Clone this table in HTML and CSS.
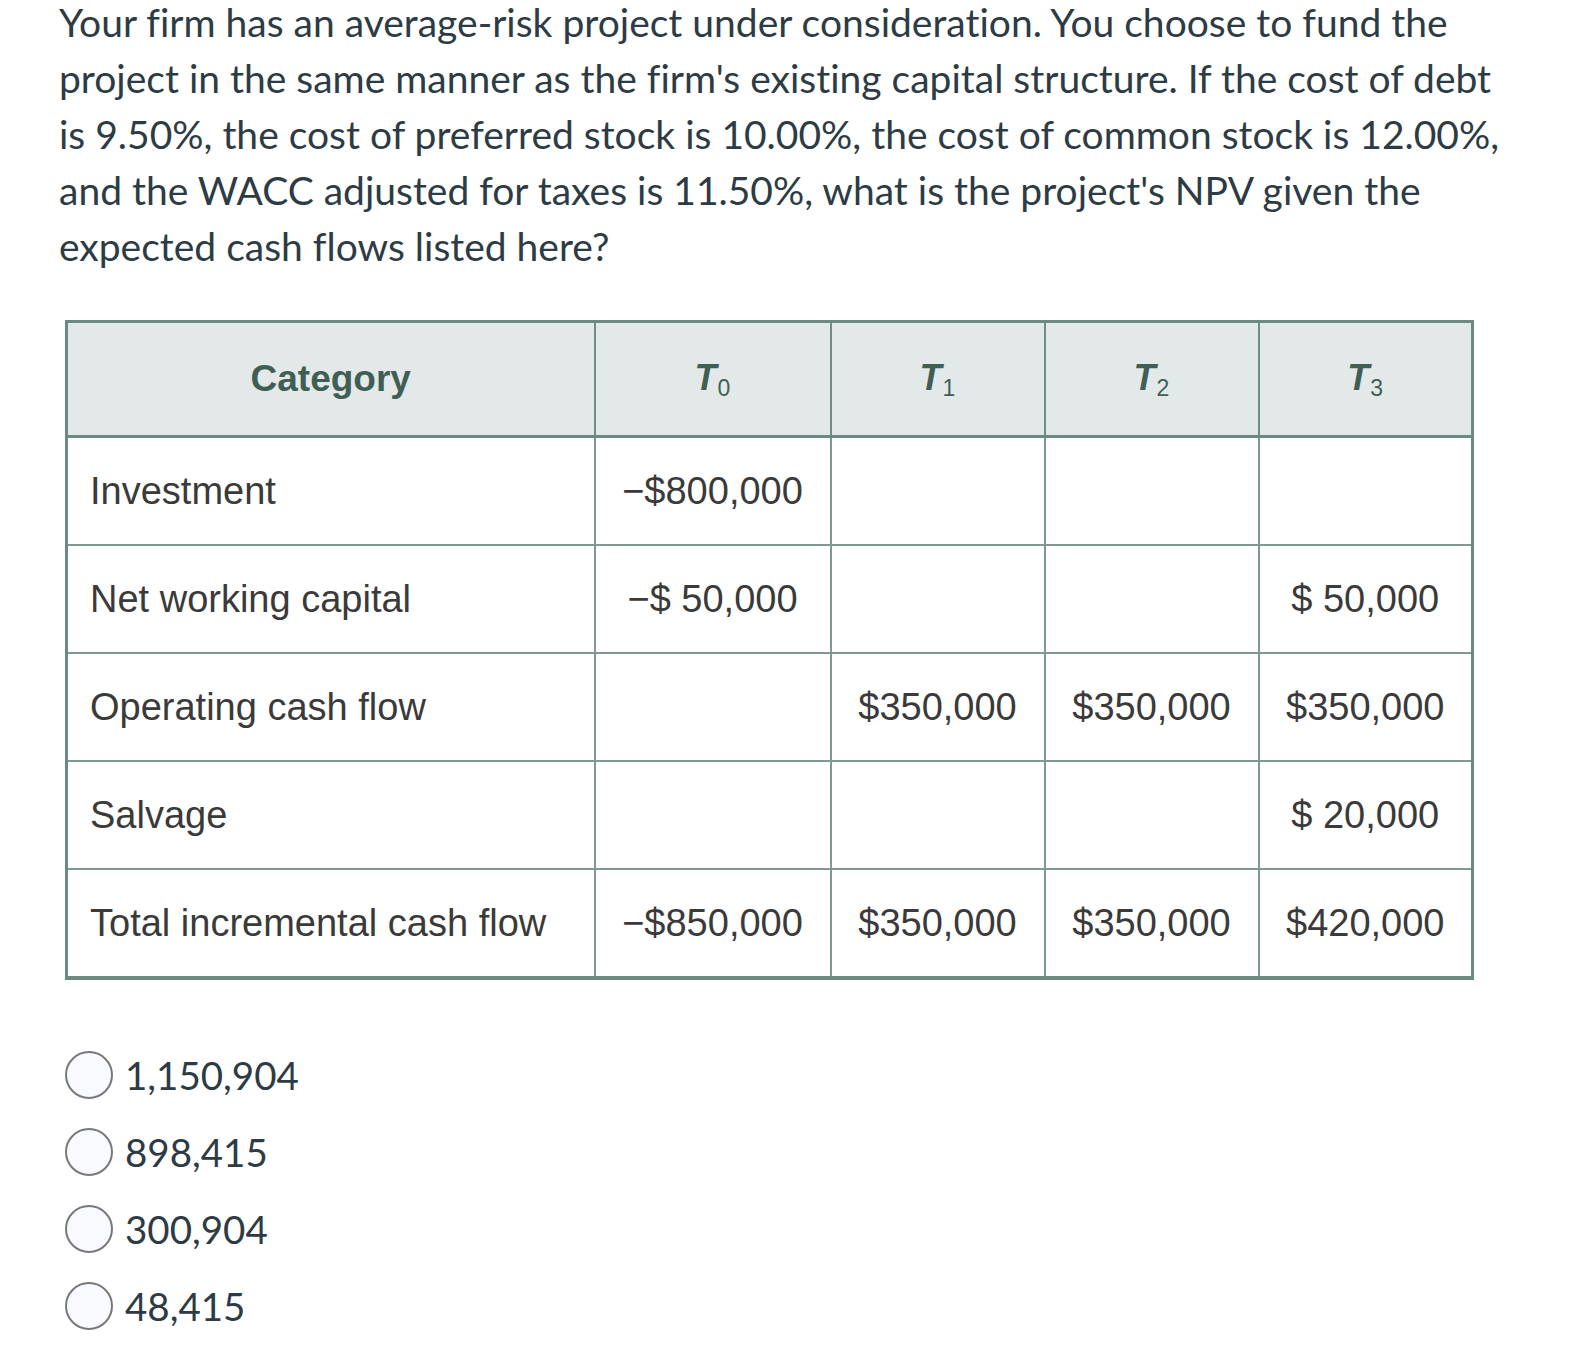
FILE: index.html
```html
<!DOCTYPE html>
<html lang="en">
<head>
<meta charset="utf-8">
<title>NPV question</title>
<link rel="stylesheet" href="styles.css">
</head>
<body>
<div class="page">
  <p class="question">Your firm has an average-risk project under consideration. You choose to fund the project in the same manner as the firm's existing capital structure. If the cost of debt is 9.50%, the cost of preferred stock is 10.00%, the cost of common stock is 12.00%, and the WACC adjusted for taxes is 11.50%, what is the project's NPV given the expected cash flows listed here?</p>

  <table class="cf">
    <colgroup>
      <col class="c-cat">
      <col class="c-t0">
      <col class="c-t">
      <col class="c-t">
      <col class="c-t">
    </colgroup>
    <thead>
      <tr>
        <th class="cat">Category</th>
        <th><span class="tt">T</span><sub>0</sub></th>
        <th><span class="tt">T</span><sub>1</sub></th>
        <th><span class="tt">T</span><sub>2</sub></th>
        <th><span class="tt">T</span><sub>3</sub></th>
      </tr>
    </thead>
    <tbody>
      <tr>
        <td class="label">Investment</td>
        <td>&minus;$800,000</td>
        <td></td>
        <td></td>
        <td></td>
      </tr>
      <tr>
        <td class="label">Net working capital</td>
        <td>&minus;$ 50,000</td>
        <td></td>
        <td></td>
        <td>$ 50,000</td>
      </tr>
      <tr>
        <td class="label">Operating cash flow</td>
        <td></td>
        <td>$350,000</td>
        <td>$350,000</td>
        <td>$350,000</td>
      </tr>
      <tr>
        <td class="label">Salvage</td>
        <td></td>
        <td></td>
        <td></td>
        <td>$ 20,000</td>
      </tr>
      <tr class="total">
        <td class="label">Total incremental cash flow</td>
        <td>&minus;$850,000</td>
        <td>$350,000</td>
        <td>$350,000</td>
        <td>$420,000</td>
      </tr>
    </tbody>
  </table>

  <ul class="options">
    <li class="option"><span class="radio"></span><span class="opt-text">1,150,904</span></li>
    <li class="option"><span class="radio"></span><span class="opt-text">898,415</span></li>
    <li class="option"><span class="radio"></span><span class="opt-text">300,904</span></li>
    <li class="option"><span class="radio"></span><span class="opt-text">48,415</span></li>
  </ul>
</div>
</body>
</html>
```

FILE: styles.css
```css
html, body {
  margin: 0;
  padding: 0;
  background: #ffffff;
}

.page {
  padding: 0 0 0 59px;
  font-family: Lato, "Open Sans", sans-serif;
  color: #2d3b45;
  font-variant-ligatures: none;
}

.question {
  margin: -6px 0 0 0;
  width: 1442px;
  font-size: 39px;
  line-height: 56px;
}

.cf {
  margin: 46px 0 0 6px;
  border-collapse: collapse;
  table-layout: fixed;
  width: 1407px;
  border: 3px solid #6b8a82;
  font-family: "Liberation Sans", Arial, sans-serif;
  font-size: 38px;
  color: #3a3a3a;
}

.c-cat { width: 528px; }
.c-t0 { width: 236px; }
.c-t { width: 214px; }

.cf th {
  height: 112px;
  padding: 0;
  background: #e3e9e8;
  color: #3f5f55;
  font-weight: bold;
  border: 2px solid #6f8c85;
  border-bottom: 3px solid #6b8a82;
  text-align: center;
  vertical-align: middle;
}

.cf th.cat {
  font-size: 37px;
}

.cf th .tt {
  font-style: italic;
  font-size: 36px;
}

.cf th sub {
  font-size: 23px;
  font-weight: normal;
  font-style: normal;
  vertical-align: -6px;
  margin-left: 1px;
  color: #3f5f55;
}

.cf td {
  height: 106px;
  padding: 0;
  border: 2px solid #7f9894;
  text-align: center;
  vertical-align: middle;
  white-space: nowrap;
}

.cf td.label {
  text-align: left;
  padding-left: 22px;
}

.cf tr.total td {
  border-bottom: 4px solid #6b8a82;
}

.options {
  list-style: none;
  margin: 56px 0 0 0;
  padding: 0;
}

.option {
  display: flex;
  align-items: center;
  gap: 12px;
  height: 77px;
  font-size: 38.5px;
  color: #2d3b45;
}

.radio {
  flex: none;
  width: 44px;
  height: 44px;
  margin-left: 6px;
  border: 2px solid #787878;
  border-radius: 50%;
  background: #f8faff;
}
```
